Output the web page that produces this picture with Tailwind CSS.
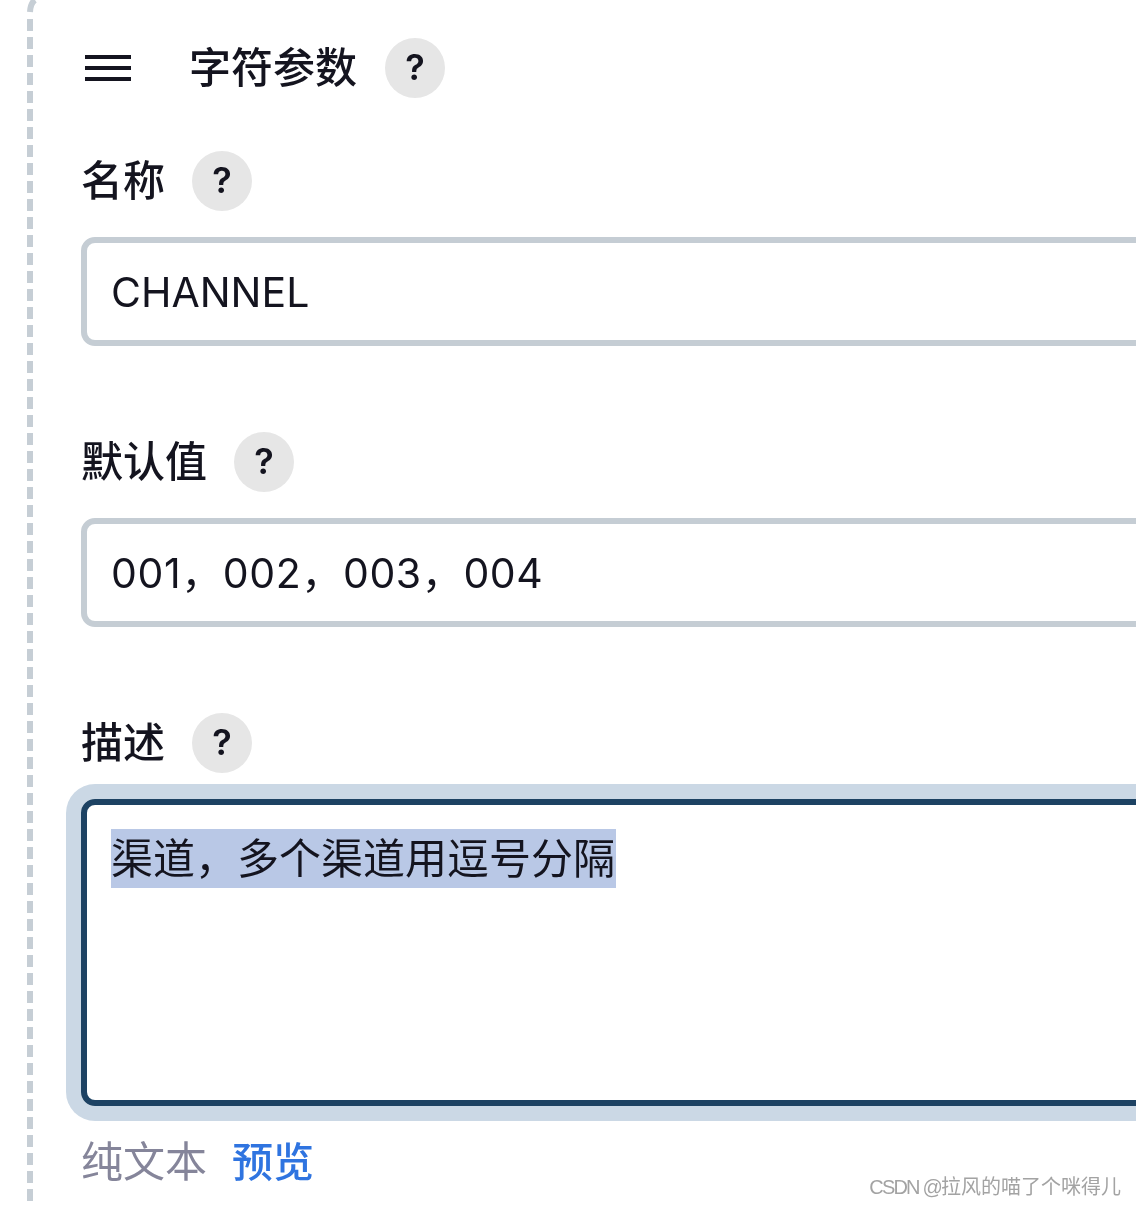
<!DOCTYPE html>
<html lang="zh">
<head>
    <meta charset="UTF-8">
    <meta name="viewport" content="width=device-width, initial-scale=1.0">
    <title>字符参数</title>
    <script src="https://cdn.jsdelivr.net/npm/@tailwindcss/browser@4"></script>
</head>
<body class="bg-white overflow-hidden font-['Inter','Noto_Sans_CJK_SC',sans-serif] text-[#14141f]">
    <div class="relative h-[1206px] w-[1136px] overflow-hidden blur-[0.5px]">
        <!-- dashed edge of the block -->
        <svg class="absolute left-[24px] top-0" width="16" height="1206" fill="none" stroke="#c6ced5" stroke-width="6">
            <path d="M11 0 Q6.500 3 6 12"></path>
            <path d="M6 19V1206" stroke-dasharray="12 6"></path>
        </svg>

        <div class="w-[1300px] pl-[81px] pt-[38px]">
            <div class="flex h-[60px] items-center">
                <svg class="ml-[4px] mr-[58px]" width="46" height="28" fill="none" stroke="#14141f" stroke-width="4">
                    <path d="M0 3H46M0 14H46M0 25H46"></path>
                </svg>
                <h2 class="text-[42px] leading-[60px] font-medium">字符参数</h2>
                <span class="ml-[28px] flex h-[60px] w-[60px] items-center justify-center rounded-full bg-[#e6e6e6] pb-[2px] text-[36px] font-semibold">?</span>
            </div>

            <div class="mt-[53px] flex h-[60px] items-center">
                <label class="text-[42px] leading-[60px] font-medium">名称</label>
                <span class="ml-[27px] flex h-[60px] w-[60px] items-center justify-center rounded-full bg-[#e6e6e6] pb-[2px] text-[36px] font-semibold">?</span>
            </div>
            <div class="mt-[26px] flex h-[109px] items-center rounded-[14px] border-[6px] border-[#c5cdd4] pl-[24px] pt-[2px] text-[41px]">CHANNEL</div>

            <div class="mt-[86px] flex h-[60px] items-center">
                <label class="text-[42px] leading-[60px] font-medium">默认值</label>
                <span class="ml-[27px] flex h-[60px] w-[60px] items-center justify-center rounded-full bg-[#e6e6e6] pb-[2px] text-[36px] font-semibold">?</span>
            </div>
            <div class="mt-[26px] flex h-[109px] items-center rounded-[14px] border-[6px] border-[#c5cdd4] pl-[24px] pt-[2px] text-[41px] tracking-[0.6px]">001，002，003，004</div>

            <div class="mt-[86px] flex h-[60px] items-center">
                <label class="text-[42px] leading-[60px] font-medium">描述</label>
                <span class="ml-[27px] flex h-[60px] w-[60px] items-center justify-center rounded-full bg-[#e6e6e6] pb-[2px] text-[36px] font-semibold">?</span>
            </div>
            <div class="mt-[26px] h-[307px] rounded-[14px] border-[6px] border-[#1d4263] pl-[24px] pt-[24px] text-[42px] leading-[59px] shadow-[0_0_0_15px_#cbd8e5]">
                <span class="block w-[505px] whitespace-nowrap bg-[#b9c8e6]">渠道，多个渠道用逗号分隔</span>
            </div>

            <div class="mt-[26px] flex text-[42px] leading-[60px]">
                <span class="text-[#85859a]">纯文本</span>
                <span class="ml-[25px] text-[41px] font-medium text-[#2f74e0]">预览</span>
            </div>
        </div>

        <span class="absolute right-[15px] top-[1173px] font-['Liberation_Sans','Noto_Sans_CJK_SC',sans-serif] text-[20px] leading-[28px] text-[#a3a3a3]"><span class="tracking-[-1.8px]">CSDN @</span>拉风的喵了个咪得儿</span>
    </div>
</body>
</html>
